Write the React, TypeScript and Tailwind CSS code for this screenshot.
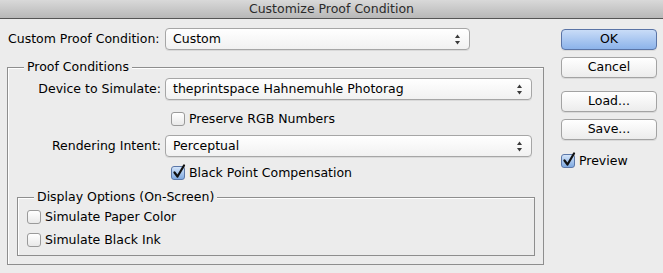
import React from 'react'

const font = { fontFamily: '"DejaVu Sans", "Liberation Sans", sans-serif' }

function Arrows() {
  return (
    <svg width="7" height="11" viewBox="0 0 7 11" className="shrink-0">
      <path d="M3.5 0.5 L6 4 L1 4 Z" fill="#3a3a3a" />
      <path d="M3.5 10.5 L6 7 L1 7 Z" fill="#3a3a3a" />
    </svg>
  )
}

function Select({ value, width }: { value: string; width: string }) {
  return (
    <div
      className={`${width} h-[22px] flex items-center justify-between pl-[7px] pr-[8px] rounded-[4px] border border-[#a6a6a6] bg-gradient-to-b from-white to-[#f1f1f1] shadow-[0_1px_0_rgba(0,0,0,0.08)]`}
    >
      <span className="leading-none">{value}</span>
      <Arrows />
    </div>
  )
}

function Checkbox({ label, checked = false }: { label: string; checked?: boolean }) {
  return (
    <div className="h-[18px] flex items-center gap-[4px]">
      <div
        className={`relative w-[14px] h-[14px] rounded-[3px] border ${
          checked
            ? 'border-[#5b77a8] bg-gradient-to-b from-[#d3e4f9] to-[#7fa9e0]'
            : 'border-[#9a9a9a] bg-gradient-to-b from-white to-[#e9e9e9]'
        }`}
      >
        {checked && (
          <svg width="14" height="15" viewBox="0 0 14 15" className="absolute left-[0px] -top-[3px]">
            <path d="M2.5 8.5 L5.5 12.5 L12 1.5" fill="none" stroke="#111" strokeWidth="2.2" strokeLinejoin="round" strokeLinecap="round" />
          </svg>
        )}
      </div>
      <span className="leading-none">{label}</span>
    </div>
  )
}

function Button({ label, primary = false }: { label: string; primary?: boolean }) {
  return (
    <div
      className={`h-[21px] flex items-center justify-center rounded-[4px] border ${
        primary
          ? 'border-[#5a74a6] bg-gradient-to-b from-[#c9dcf7] to-[#8cb3ea]'
          : 'border-[#a3a3a3] bg-gradient-to-b from-white to-[#ececec]'
      } shadow-[0_1px_0_rgba(0,0,0,0.08)]`}
    >
      <span className="leading-none">{label}</span>
    </div>
  )
}

export default function App() {
  return (
    <div className="w-[663px] h-[273px] bg-[#ececec] text-black text-[12.5px] overflow-hidden" style={font}>
      {/* title bar */}
      <div className="h-[19px] flex items-center justify-center bg-gradient-to-b from-[#d9d9d9] to-[#b8b8b8] border-b border-[#555]">
        <span className="text-[#2b2b2b] leading-none">Customize Proof Condition</span>
      </div>

      <div className="flex pl-[7px]">
        <div className="w-[537px]">
          <div className="mt-[9px] flex items-center">
            <span className="w-[154px] pl-[1px]">Custom Proof Condition:</span>
            <div className="ml-[4px]">
              <Select value="Custom" width="w-[305px]" />
            </div>
          </div>

          {/* Proof Conditions group */}
          <div className="relative mt-[17px] border border-[#8e8e8e] shadow-[inset_1px_1px_0_#fff] pt-[10px] pb-[8px]">
            <span className="absolute -top-[9px] left-[16px] px-[3px] leading-[16px] bg-[#ececec]">Proof Conditions</span>

            <div className="flex items-center">
              <span className="w-[153px] text-right">Device to Simulate:</span>
              <div className="ml-[4px]">
                <Select value="theprintspace Hahnemuhle Photorag" width="w-[367px]" />
              </div>
            </div>

            <div className="mt-[10px] ml-[163px]">
              <Checkbox label="Preserve RGB Numbers" />
            </div>

            <div className="mt-[7px] flex items-center">
              <span className="w-[153px] text-right">Rendering Intent:</span>
              <div className="ml-[4px]">
                <Select value="Perceptual" width="w-[367px]" />
              </div>
            </div>

            <div className="mt-[7px] ml-[163px]">
              <Checkbox label="Black Point Compensation" checked />
            </div>

            {/* Display Options group */}
            <div className="relative mt-[15px] ml-[9px] mr-[8px] border border-[#8e8e8e] shadow-[inset_1px_1px_0_#fff] pt-[10px] pb-[6px] pl-[9px]">
              <span className="absolute -top-[9px] left-[16px] px-[3px] leading-[16px] bg-[#ececec]">
                Display Options (On-Screen)
              </span>
              <Checkbox label="Simulate Paper Color" />
              <div className="mt-[5px]">
                <Checkbox label="Simulate Black Ink" />
              </div>
            </div>
          </div>
        </div>

        {/* buttons */}
        <div className="ml-[17px] w-[96px] pt-[10px]">
          <Button label="OK" primary />
          <div className="mt-[7px]">
            <Button label="Cancel" />
          </div>
          <div className="mt-[13px]">
            <Button label="Load..." />
          </div>
          <div className="mt-[7px]">
            <Button label="Save..." />
          </div>
          <div className="mt-[12px]">
            <Checkbox label="Preview" checked />
          </div>
        </div>
      </div>
    </div>
  )
}
